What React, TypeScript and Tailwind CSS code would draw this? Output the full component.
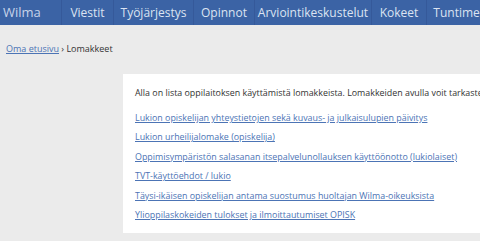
const navItems = [
  { label: 'Viestit', w: 'w-[52px]' },
  { label: 'Työjärjestys', w: 'w-[80px]' },
  { label: 'Opinnot', w: 'w-[61px]' },
  { label: 'Arviointikeskustelut', w: 'w-[117px]' },
  { label: 'Kokeet', w: 'w-[55px]' },
  { label: 'Tuntimerkinnät', w: 'w-[100px]' },
];

const forms = [
  'Lukion opiskelijan yhteystietojen sekä kuvaus- ja julkaisulupien päivitys',
  'Lukion urheilijalomake (opiskelija)',
  'Oppimisympäristön salasanan itsepalvelunollauksen käyttöönotto (lukiolaiset)',
  'TVT-käyttöehdot / lukio',
  'Täysi-ikäisen opiskelijan antama suostumus huoltajan Wilma-oikeuksista',
  'Ylioppilaskokeiden tulokset ja ilmoittautumiset OPISK',
];

export default function App() {
  return (
    <div className="w-[480px] h-[241px] overflow-hidden bg-[#ebebeb]" style={{ fontFamily: '"Open Sans", sans-serif' }}>
      <nav className="flex h-[25px] bg-[#3b63a5] text-[12px] text-[#dbe4f2] whitespace-nowrap">
        <div className="flex items-center pl-[3px] w-[62px] shrink-0 border-r border-[#35599a] text-[13px] text-[#c7d4ea]">Wilma</div>
        {navItems.map((item) => (
          <div key={item.label} className={`flex items-center justify-center shrink-0 border-r border-[#35599a] ${item.w}`}>
            {item.label}
          </div>
        ))}
      </nav>

      <div className="px-[6px] pt-[17px] text-[9px] leading-[14px] text-[#333]">
        <a className="text-[#4c74b5] underline">Oma etusivu</a>
        <span> › Lomakkeet</span>
      </div>

      <div className="ml-[123px] mt-[18px] h-[159px] bg-white pl-[12px] pt-[12px] whitespace-nowrap">
        <p className="text-[8.9px] text-[#333] leading-[14px]">
          Alla on lista oppilaitoksen käyttämistä lomakkeista. Lomakkeiden avulla voit tarkastella ja päivittää tietoja.
        </p>
        <ul className="mt-[11px] flex flex-col gap-[5.4px] text-[8.9px] leading-[14px]">
          {forms.map((f) => (
            <li key={f}>
              <a className="text-[#4c74b5] underline">{f}</a>
            </li>
          ))}
        </ul>
      </div>
    </div>
  );
}
